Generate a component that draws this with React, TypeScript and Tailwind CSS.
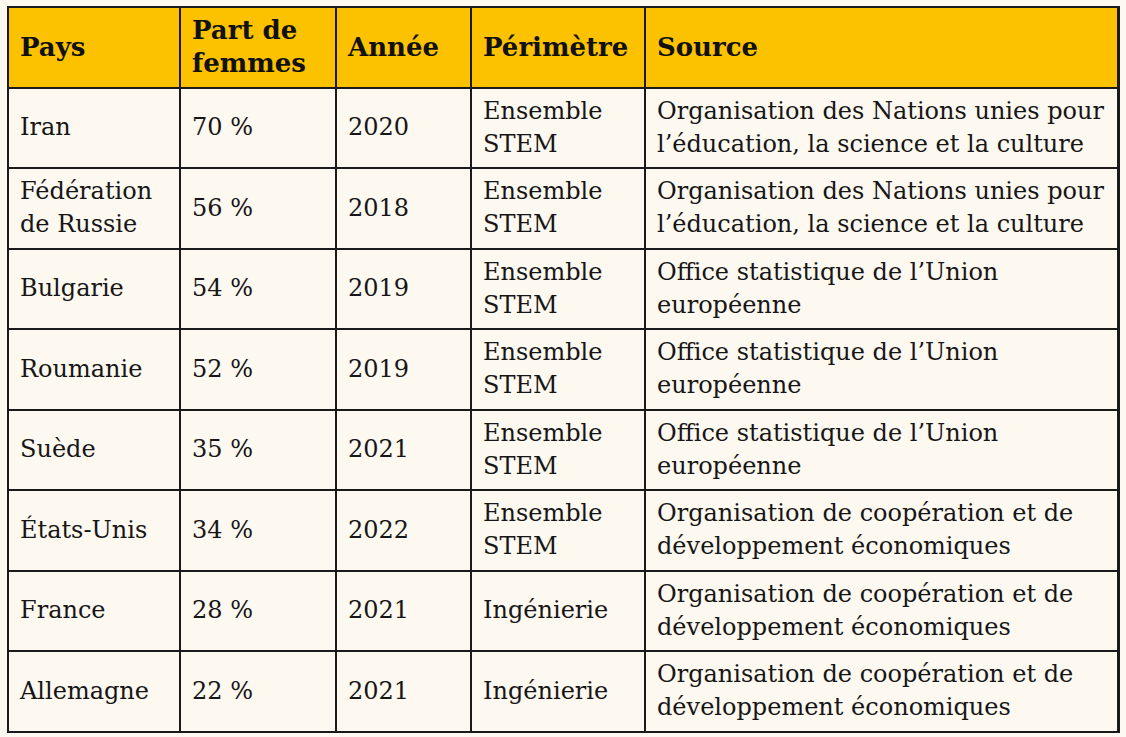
import React from "react";

const rows: [string, string, string, string, string][] = [
  ["Iran", "70 %", "2020", "Ensemble STEM", "Organisation des Nations unies pour l’éducation, la science et la culture"],
  ["Fédération de Russie", "56 %", "2018", "Ensemble STEM", "Organisation des Nations unies pour l’éducation, la science et la culture"],
  ["Bulgarie", "54 %", "2019", "Ensemble STEM", "Office statistique de l’Union européenne"],
  ["Roumanie", "52 %", "2019", "Ensemble STEM", "Office statistique de l’Union européenne"],
  ["Suède", "35 %", "2021", "Ensemble STEM", "Office statistique de l’Union européenne"],
  ["États-Unis", "34 %", "2022", "Ensemble STEM", "Organisation de coopération et de développement économiques"],
  ["France", "28 %", "2021", "Ingénierie", "Organisation de coopération et de développement économiques"],
  ["Allemagne", "22 %", "2021", "Ingénierie", "Organisation de coopération et de développement économiques"],
];

const headers = ["Pays", "Part de femmes", "Année", "Périmètre", "Source"];

export default function App() {
  return (
    <div
      className="w-[1126px] h-[737px] bg-[#fdf8f0] pl-[7px] pt-[6px] overflow-hidden"
      style={{ fontFamily: '"DejaVu Serif", Georgia, serif' }}
    >
      <div className="w-[1113px] grid grid-cols-[170px_154px_133px_172px_471px] auto-rows-[78.5px] gap-[2px] bg-[#1a1a1a] pt-[2px] pl-[2px] pb-[2px] pr-[3px]">
        {headers.map((h) => (
          <div
            key={h}
            className="bg-[#fcc200] flex items-center pl-[11px] pr-2 text-[26px] leading-[33px] font-bold text-[#111]"
          >
            <span className={h === "Part de femmes" ? "w-[130px]" : ""}>{h}</span>
          </div>
        ))}
        {rows.map((r, i) =>
          r.map((c, j) => (
            <div
              key={`${i}-${j}`}
              className="bg-[#fdf8f0] flex items-center pl-[11px] pr-2 text-[24px] leading-[33px] text-[#161616]"
            >
              <span
                className={
                  j === 0 && c === "Fédération de Russie"
                    ? "w-[140px]"
                    : j === 3 && c === "Ensemble STEM"
                    ? "w-[130px]"
                    : ""
                }
              >
                {c}
              </span>
            </div>
          ))
        )}
      </div>
    </div>
  );
}
